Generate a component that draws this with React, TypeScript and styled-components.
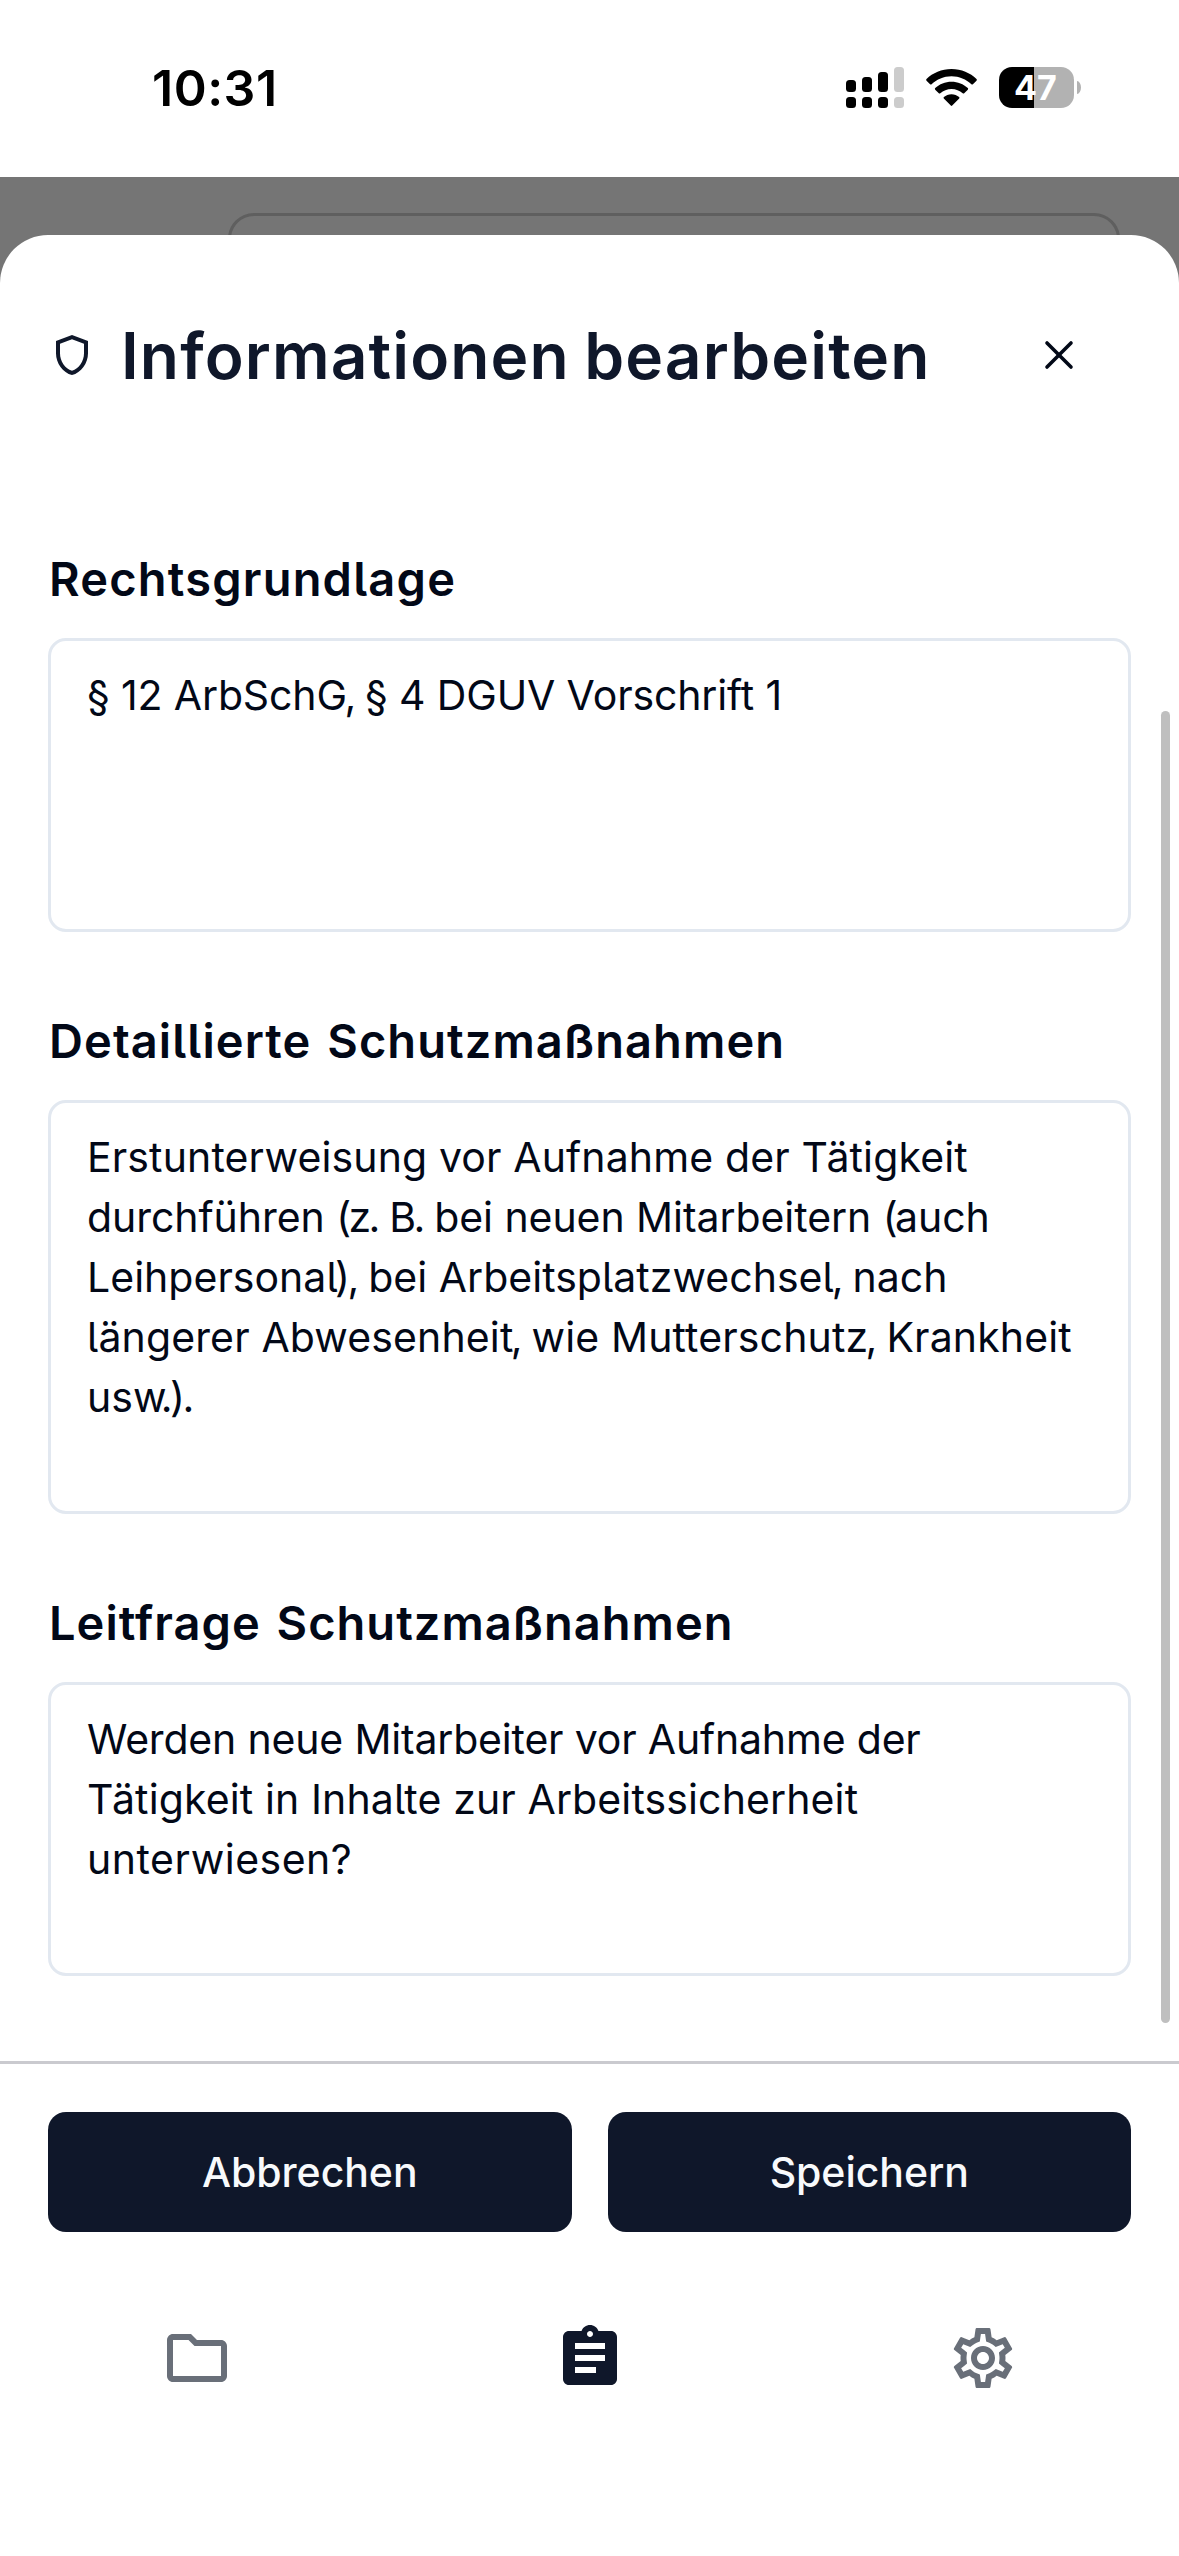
import React from "react";
import styled, { createGlobalStyle } from "styled-components";
import { X } from "lucide-react";
import { MdAssignment, MdOutlineFolder, MdOutlineSettings, MdOutlineShield } from "react-icons/md";

const GlobalStyle = createGlobalStyle`
  *, *::before, *::after { box-sizing: border-box; }
  body { margin: 0; background: #fff; }
  button { font: inherit; border: 0; background: none; padding: 0; }
`;

const Screen = styled.div`
  width: 1179px;
  height: 2556px;
  display: flex;
  flex-direction: column;
  overflow: hidden;
  background: #fff;
  color: #020817;
  font-family: Inter, "Liberation Sans", sans-serif;
  font-feature-settings: "cv05";
`;

const StatusBar = styled.header`
  height: 177px;
  flex: none;
  display: flex;
  justify-content: space-between;
  align-items: flex-start;
  padding: 58px 98px 0 152px;
  color: #000;
`;

const Time = styled.span`
  font-size: 50px;
  line-height: 60px;
  font-weight: 600;
  letter-spacing: 0.5px;
`;

const StatusIcons = styled.div`
  display: flex;
  align-items: flex-start;
  padding-top: 9px;
`;

const SignalIcon = styled.svg`
  width: 58px;
  height: 41px;
  margin-right: 22px;
`;

const WifiIcon = styled.svg`
  width: 51px;
  height: 41px;
  margin-right: 22px;
`;

const Battery = styled.div`
  width: 75px;
  height: 41px;
  padding-right: 2px;
  border-radius: 13px;
  background: linear-gradient(to right, #000 35px, #b2b2b2 35px);
  display: flex;
  align-items: center;
  justify-content: center;
  color: #fff;
  font-size: 34px;
  line-height: 41px;
  font-weight: 650;
`;

const BatteryTip = styled.span`
  width: 4px;
  height: 13px;
  margin: 14px 0 0 3px;
  border-radius: 0 4px 4px 0 / 0 6.5px 6.5px 0;
  background: #b2b2b2;
`;

const Stage = styled.div`
  height: 1884px;
  flex: none;
  display: flex;
  flex-direction: column;
  background: #757575;
`;

const Backdrop = styled.div`
  height: 58px;
  flex: none;
  padding: 36px 59px 0 228px;
  overflow: hidden;
`;

const DimmedCard = styled.div`
  height: 100px;
  border: 3px solid #5f5f5f;
  border-radius: 26px;
`;

const Sheet = styled.section`
  position: relative;
  flex: 1;
  background: #fff;
  border-radius: 48px 48px 0 0;
`;

const SheetHeader = styled.div`
  height: 240px;
  display: flex;
  align-items: center;
  padding: 0 96px 0 48px;
`;

const Title = styled.h1`
  flex: 1;
  margin: 0 0 0 24px;
  padding: 2px 0 0 1px;
  font-size: 64px;
  line-height: 80px;
  font-weight: 600;
  letter-spacing: 1.14px;
  word-spacing: -3px;
  color: #0f172a;
  white-space: nowrap;
`;

const CloseButton = styled.button`
  width: 48px;
  height: 48px;
  display: flex;
  color: #020817;
`;

const Form = styled.div`
  display: flex;
  flex-direction: column;
  gap: 72px;
  padding: 67px 48px 0;
`;

const Field = styled.div`
  display: flex;
  flex-direction: column;
  gap: 24px;
`;

const Label = styled.div<{ $spacing: number }>`
  height: 72px;
  padding: 1px 0 0 1px;
  font-size: 47px;
  line-height: 72px;
  font-weight: 600;
  letter-spacing: ${(p) => p.$spacing}px;
  word-spacing: 3px;
  white-space: nowrap;
`;

const TextBox = styled.div<{ $height: number }>`
  height: ${(p) => p.$height}px;
  border: 3px solid #e2e8f0;
  border-radius: 18px;
  padding: 24px 36px;
`;

const Line = styled.div<{ $spacing: number }>`
  font-size: 41px;
  line-height: 60px;
  letter-spacing: ${(p) => p.$spacing}px;
  white-space: nowrap;
`;

const Punctuation = styled.span`
  letter-spacing: -2.6px;
`;

const ScrollThumb = styled.div`
  position: absolute;
  top: 476px;
  right: 9px;
  width: 9px;
  height: 1312px;
  border-radius: 5px;
  background: #bfbfbf;
`;

const Actions = styled.div`
  flex: none;
  display: grid;
  grid-template-columns: 1fr 1fr;
  gap: 36px;
  padding: 48px 48px 0;
  border-top: 3px solid #cacacf;
`;

const ActionButton = styled.button`
  height: 120px;
  border-radius: 18px;
  background: #0f172a;
  color: #f8fafc;
  font-size: 41px;
  font-weight: 480;
  letter-spacing: -0.05px;
`;

const TabBar = styled.nav`
  flex: 1;
  display: grid;
  grid-template-columns: repeat(3, 1fr);
  align-items: start;
  padding-top: 90px;
`;

const Tab = styled.div<{ $active?: boolean }>`
  display: flex;
  justify-content: center;
  color: ${(p) => (p.$active ? "#0f172a" : "#696f79")};
`;

type TextLine = [text: string, spacing: number];

const fields: { label: TextLine; height: number; lines: TextLine[] }[] = [
  {
    label: ["Rechtsgrundlage", 1.2],
    height: 294,
    lines: [["§ 12 ArbSchG, § 4 DGUV Vorschrift 1", -0.13]],
  },
  {
    label: ["Detaillierte Schutzmaßnahmen", 1.08],
    height: 414,
    lines: [
      ["Erstunterweisung vor Aufnahme der Tätigkeit", 0.13],
      ["durchführen (z. B. bei neuen Mitarbeitern (auch", -0.06],
      ["Leihpersonal), bei Arbeitsplatzwechsel, nach", 0.02],
      ["längerer Abwesenheit, wie Mutterschutz, Krankheit", 0.13],
      ["usw.).", 0],
    ],
  },
  {
    label: ["Leitfrage Schutzmaßnahmen", 1.02],
    height: 294,
    lines: [
      ["Werden neue Mitarbeiter vor Aufnahme der", -0.18],
      ["Tätigkeit in Inhalte zur Arbeitssicherheit", 0.12],
      ["unterwiesen?", 0.5],
    ],
  },
];

const signalBars = [
  { x: 0, top: 13, color: "#000" },
  { x: 16, top: 10, color: "#000" },
  { x: 32, top: 5, color: "#000" },
  { x: 48, top: 0, color: "#ccc" },
];

/* Punctuation marks, with the letter before them, are set tighter than the rest. */
function BodyLine({ text, spacing }: { text: string; spacing: number }) {
  return (
    <Line $spacing={spacing}>
      {text
        .split(/(\S?[.,()]+)/)
        .map((part, i) => (i % 2 ? <Punctuation key={i}>{part}</Punctuation> : part))}
    </Line>
  );
}

export default function App() {
  return (
    <>
      <GlobalStyle />
      <Screen>
        <StatusBar>
          <Time>10:31</Time>
          <StatusIcons>
            <SignalIcon viewBox="0 0 58 41">
              {signalBars.map((bar) => (
                <g key={bar.x} fill={bar.color}>
                  <rect x={bar.x} y={bar.top} width="10" height={25 - bar.top} rx="3.5" />
                  <rect x={bar.x} y="30" width="10" height="11" rx="3.5" />
                </g>
              ))}
            </SignalIcon>
            <WifiIcon viewBox="0 0 51 41">
              <path d="M25.5 2C35.4 2 44.2 5.8 50.5 12.1c.5.5.5 1.1 0 1.6l-3.6 3.6c-.4.4-1.1.4-1.5 0C40.2 12.3 33.2 9.3 25.5 9.3S10.8 12.3 5.6 17.3c-.4.4-1.1.4-1.5 0L.5 13.7c-.5-.5-.5-1.1 0-1.6C6.8 5.8 15.6 2 25.5 2Z" />
              <path d="M25.5 14.7c6.3 0 12 2.4 16.3 6.4.5.5.5 1.1 0 1.6l-3.6 3.6c-.4.4-1 .4-1.5 0-3-2.7-6.9-4.3-11.2-4.3s-8.2 1.6-11.2 4.3c-.5.4-1.1.4-1.5 0l-3.6-3.6c-.5-.5-.5-1.1 0-1.6 4.3-4 10-6.4 16.3-6.4Z" />
              <path d="M25.5 27.2c2.9 0 5.6 1.1 7.6 2.8.5.5.5 1.1.1 1.6l-7 7c-.4.4-1 .4-1.4 0l-7-7c-.4-.5-.4-1.1.1-1.6 2-1.7 4.7-2.8 7.6-2.8Z" />
            </WifiIcon>
            <Battery>47</Battery>
            <BatteryTip />
          </StatusIcons>
        </StatusBar>

        <Stage>
          <Backdrop>
            <DimmedCard />
          </Backdrop>
          <Sheet>
            <SheetHeader>
              <MdOutlineShield size={48} color="#0f172a" />
              <Title>Informationen bearbeiten</Title>
              <CloseButton aria-label="Schließen">
                <X size={48} strokeWidth={1.8} />
              </CloseButton>
            </SheetHeader>
            <Form>
              {fields.map((field) => (
                <Field key={field.label[0]}>
                  <Label $spacing={field.label[1]}>{field.label[0]}</Label>
                  <TextBox $height={field.height}>
                    {field.lines.map(([text, spacing]) => (
                      <BodyLine key={text} text={text} spacing={spacing} />
                    ))}
                  </TextBox>
                </Field>
              ))}
            </Form>
            <ScrollThumb />
          </Sheet>
        </Stage>

        <Actions>
          <ActionButton>Abbrechen</ActionButton>
          <ActionButton>Speichern</ActionButton>
        </Actions>

        <TabBar>
          <Tab>
            <MdOutlineFolder size={72} />
          </Tab>
          <Tab $active>
            <MdAssignment size={72} />
          </Tab>
          <Tab>
            <MdOutlineSettings size={72} />
          </Tab>
        </TabBar>
      </Screen>
    </>
  );
}
